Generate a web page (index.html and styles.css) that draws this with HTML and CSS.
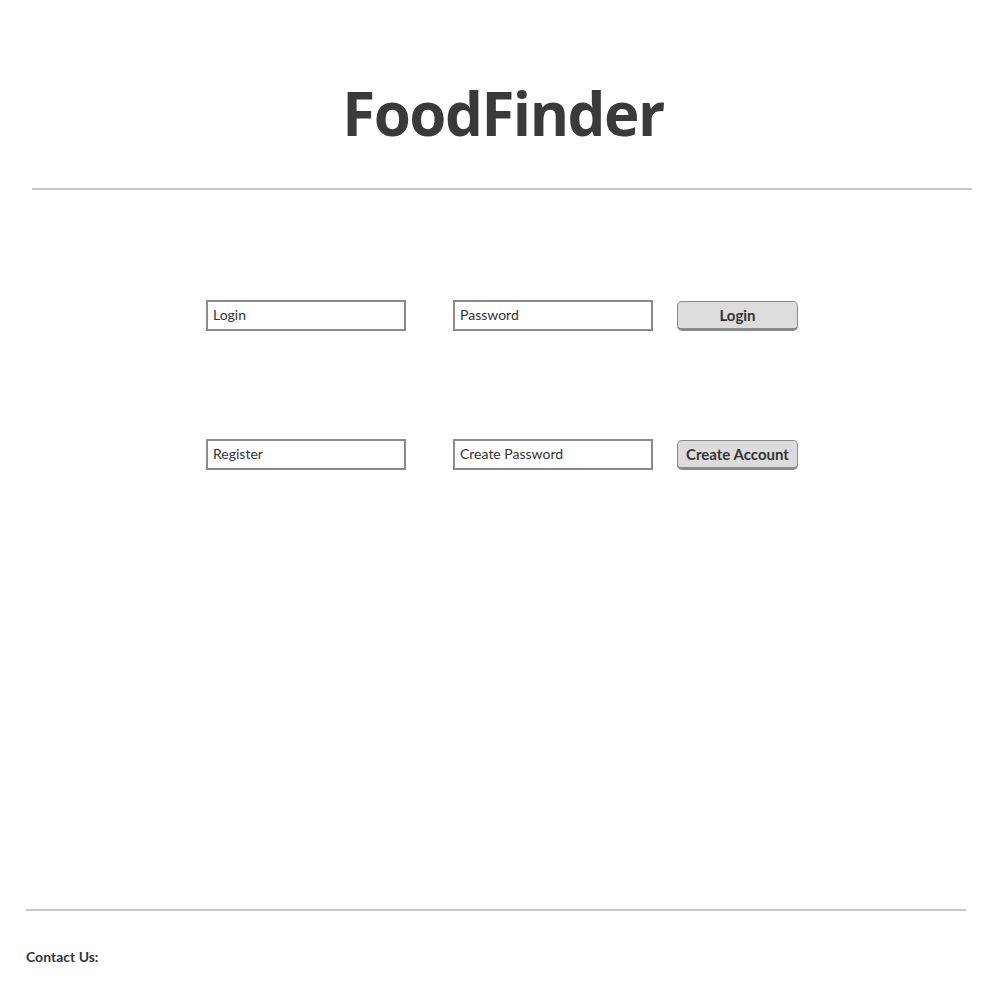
FILE: index.html
```html
<html>
  <head>
    <link rel="stylesheet" href="styles.css">
    <title>FoodFinder</title>
  </head>
  <body>
    <div class="header">
      <h1 class="title">FoodFinder</h1>
    </div>
    <hr class="top-rule">
    <div class="forms">
      <div class="form-row">
        <div class="field">Login</div>
        <div class="field field-second">Password</div>
        <button class="btn">Login</button>
      </div>
      <div class="form-row">
        <div class="field">Register</div>
        <div class="field field-second">Create Password</div>
        <button class="btn">Create Account</button>
      </div>
    </div>
    <div class="footer">
      <hr class="bottom-rule">
      <p class="contact">Contact Us:</p>
    </div>
  </body>
</html>
```

FILE: styles.css
```css
body {
  margin: 0;
  background: #ffffff;
  color: #333333;
  font-family: "Open Sans", "Noto Sans", sans-serif;
}

.header {
  height: 188px;
  display: flex;
  justify-content: center;
}

.title {
  margin: 73px 0 0 14px;
  font-size: 60px;
  font-weight: 700;
  letter-spacing: -1.5px;
  color: #3a3a3a;
  line-height: 80px;
}

.top-rule {
  margin: 0 20px 0 32px;
  border: none;
  height: 2px;
  background: #c8c8c8;
}

.forms {
  height: 719px;
  padding: 110px 0 0 206px;
  box-sizing: border-box;
  display: flex;
  flex-direction: column;
  gap: 108px;
}

.form-row {
  display: flex;
  align-items: flex-start;
}

.field {
  width: 200px;
  height: 31px;
  box-sizing: border-box;
  border: 2px solid #8a8a8a;
  padding: 0 5px;
  font-family: "Lato", sans-serif;
  font-size: 14px;
  line-height: 26px;
  color: #333333;
}

.field-second {
  margin-left: 47px;
}

.btn {
  margin: 1px 0 0 24px;
  width: 121px;
  height: 30px;
  box-sizing: border-box;
  border: 1.5px solid #8a8a8a;
  border-bottom-width: 3px;
  border-radius: 5px;
  background: #dcdcdc;
  padding: 0;
  font-family: "Lato", sans-serif;
  font-size: 15px;
  font-weight: 700;
  color: #333333;
}

.footer {
  padding: 0 26px;
}

.bottom-rule {
  margin: 0;
  border: none;
  height: 2px;
  width: 940px;
  background: #c8c8c8;
}

.contact {
  margin: 37px 0 0;
  font-family: "Lato", sans-serif;
  font-size: 14px;
  font-weight: 700;
  color: #333333;
}
```
